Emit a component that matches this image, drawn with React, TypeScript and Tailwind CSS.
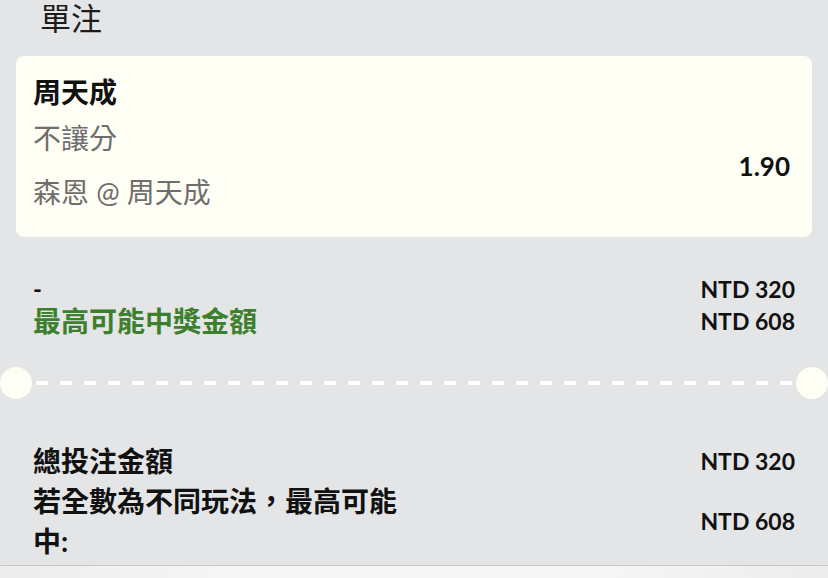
const font = "font-['Lato','Noto_Sans_CJK_TC',sans-serif]";

const SingleBet = () => {
  return (
    <div className={`w-[828px] h-[578px] overflow-hidden bg-[#e4e5e7] flex flex-col ${font}`}>
      <div className="pl-[40px] text-[31px] leading-[36px] text-[#1c1c1c]">單注</div>

      <div className="mx-4 mt-[20px] h-[181px] rounded-lg bg-[#fffef4] flex justify-between pl-[17px] pr-[22px]">
        <div className="flex flex-col pt-[20px]">
          <div className="text-[28px] leading-[32px] font-bold text-[#111]">周天成</div>
          <div className="mt-[14px] text-[28px] leading-[32px] text-[#6e6e6e]">不讓分</div>
          <div className="mt-[22px] text-[28px] leading-[32px] text-[#6e6e6e]">森恩 @ 周天成</div>
        </div>
        <div className="pt-[94px] text-[26px] leading-[32px] font-bold text-[#111]">1.90</div>
      </div>

      <div className="mt-[36px] px-[33px] flex flex-col">
        <div className="flex justify-between items-center h-[32px]">
          <span className="text-[24px] font-bold text-[#111]">-</span>
          <span className="text-[23px] font-bold text-[#111]">NTD 320</span>
        </div>
        <div className="flex justify-between items-center h-[32px]">
          <span className="text-[28px] font-bold text-[#3c7f2c]">最高可能中獎金額</span>
          <span className="text-[23px] font-bold text-[#111]">NTD 608</span>
        </div>
      </div>

      <div className="mt-[30px] flex items-center h-[32px]">
        <div className="w-8 h-8 rounded-full bg-[#fffef4] shrink-0" />
        <div className="flex-1 mx-1 h-[4px] bg-[repeating-linear-gradient(90deg,#ffffff_0_12px,transparent_12px_24px)]" />
        <div className="w-8 h-8 rounded-full bg-[#fffef4] shrink-0" />
      </div>

      <div className="mt-[42px] px-[33px] flex flex-col text-[#111]">
        <div className="flex justify-between items-center">
          <span className="w-[381px] text-[28px] leading-[40px] font-bold">總投注金額</span>
          <span className="text-[23px] font-bold">NTD 320</span>
        </div>
        <div className="flex justify-between items-center">
          <span className="w-[381px] text-[28px] leading-[40px] font-bold">若全數為不同玩法，最高可能中:</span>
          <span className="text-[23px] font-bold">NTD 608</span>
        </div>
      </div>

      <div className="mt-[4px] flex-1 border-t border-[#c9c9c9] bg-[linear-gradient(90deg,#ececec,#f7f7f7_30%,#f7f7f7_70%,#ececec)]" />
    </div>
  );
};

export default function App() {
  return <SingleBet />;
}
